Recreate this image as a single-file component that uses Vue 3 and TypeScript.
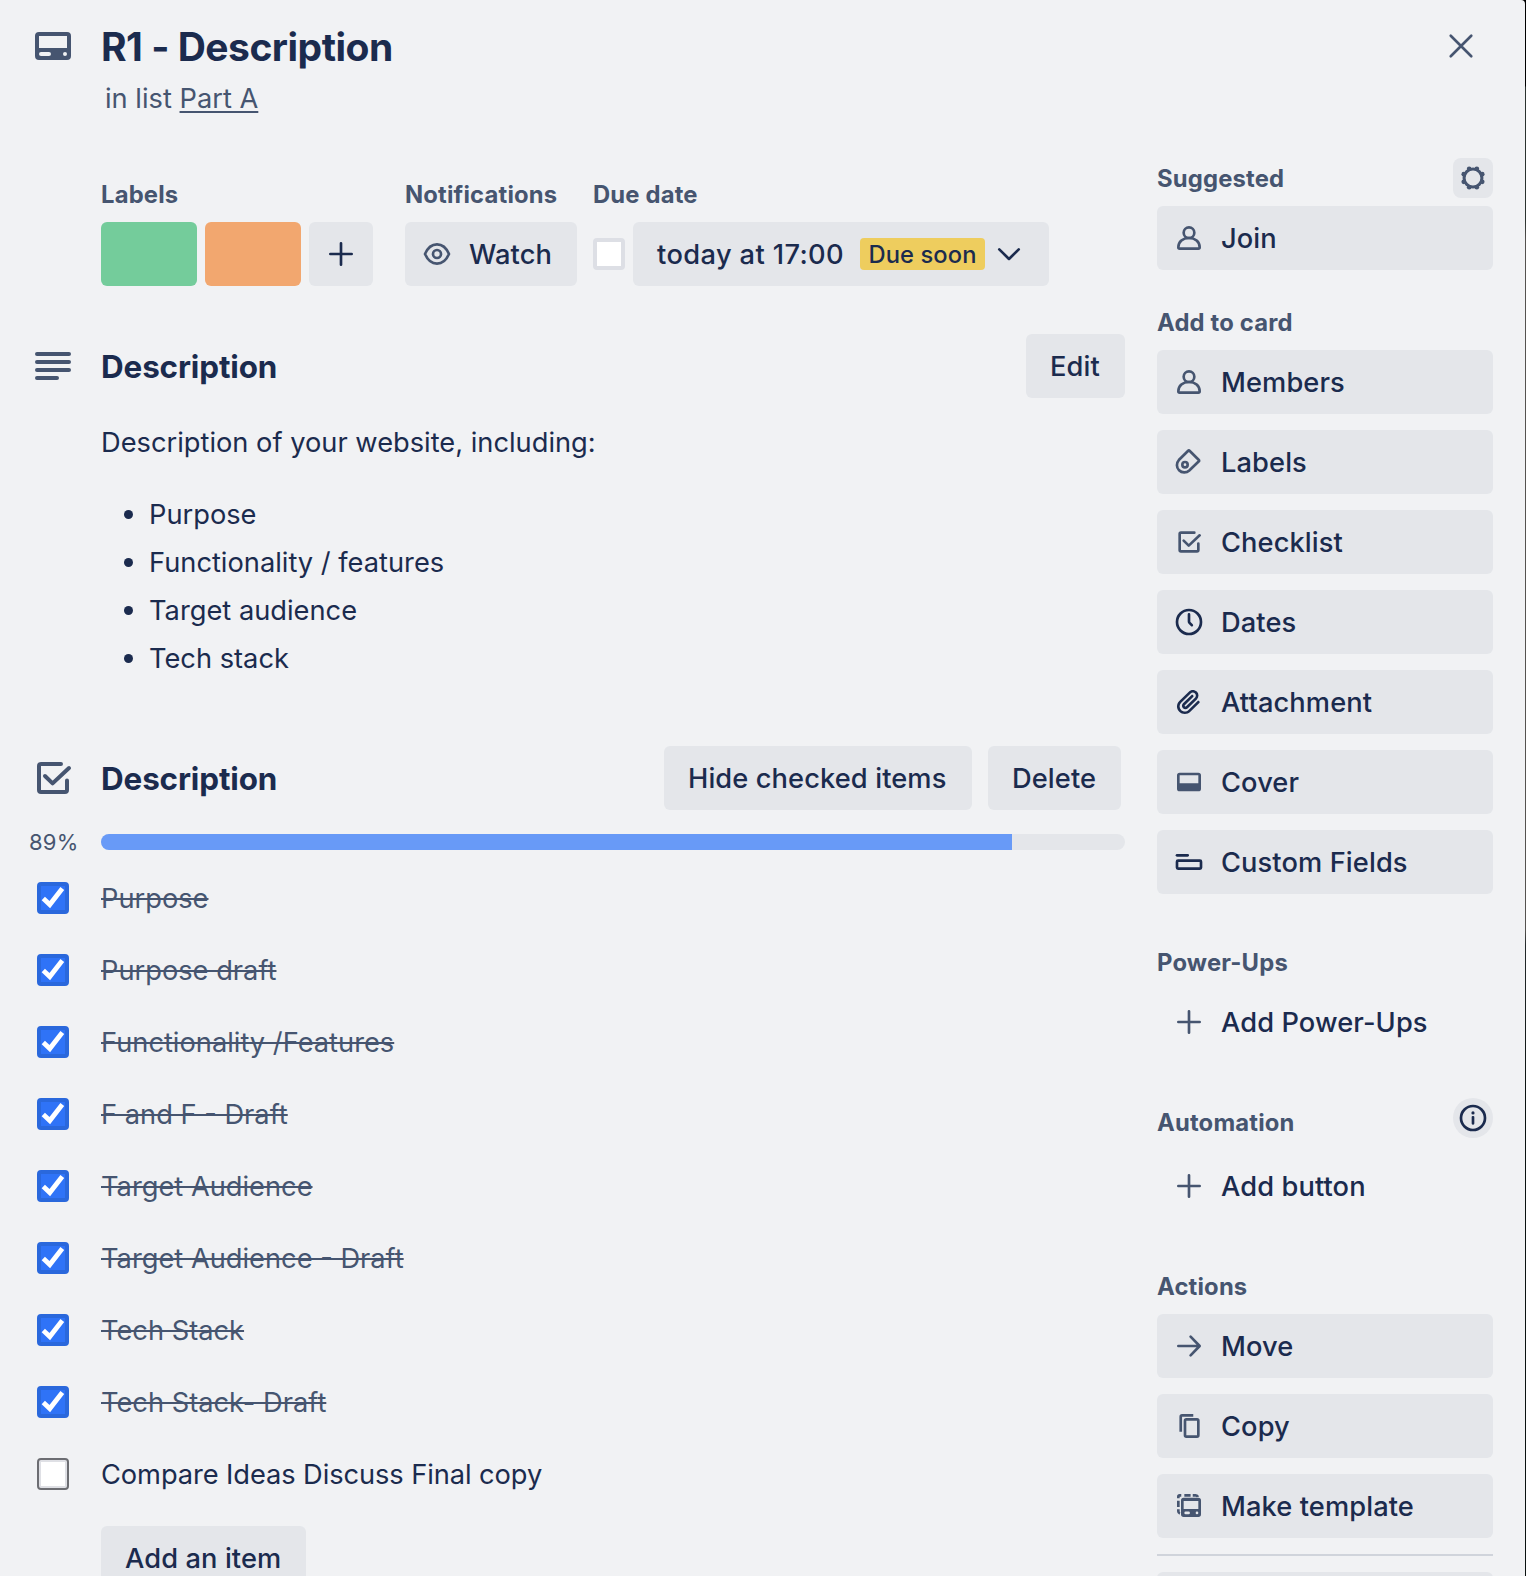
<script setup lang="ts">
interface CheckItem {
  text: string
  done: boolean
}
interface SideButton {
  label: string
  icon: string
}

const bullets: string[] = ['Purpose', 'Functionality / features', 'Target audience', 'Tech stack']

const items: CheckItem[] = [
  { text: 'Purpose', done: true },
  { text: 'Purpose draft', done: true },
  { text: 'Functionality /Features', done: true },
  { text: 'F and F - Draft', done: true },
  { text: 'Target Audience', done: true },
  { text: 'Target Audience - Draft', done: true },
  { text: 'Tech Stack', done: true },
  { text: 'Tech Stack- Draft', done: true },
  { text: 'Compare Ideas Discuss Final copy', done: false },
]
const progress = Math.round((items.filter((i) => i.done).length / items.length) * 100)

const addButtons: SideButton[] = [
  { label: 'Members', icon: 'member' },
  { label: 'Labels', icon: 'label' },
  { label: 'Checklist', icon: 'checklist' },
  { label: 'Dates', icon: 'clock' },
  { label: 'Attachment', icon: 'clip' },
  { label: 'Cover', icon: 'cover' },
  { label: 'Custom Fields', icon: 'fields' },
]
const actionButtons: SideButton[] = [
  { label: 'Move', icon: 'move' },
  { label: 'Copy', icon: 'copy' },
  { label: 'Make template', icon: 'template' },
]

const gearTeeth = Array.from({ length: 8 }, (_, k) => {
  const a = ((22.5 + 45 * k) * Math.PI) / 180
  return { x: 12 + 7.5 * Math.cos(a), y: 12 + 7.5 * Math.sin(a) }
})
</script>

<template>
  <svg class="defs" width="0" height="0" aria-hidden="true">
    <symbol id="i-member" viewBox="0 0 24 24">
      <circle class="s" cx="12" cy="8" r="4" />
      <path class="s" d="M4 19C4 14.8 7.4 12 12 12s8 2.8 8 7c0 .6-.4 1-1 1H5c-.6 0-1-.4-1-1z" />
    </symbol>
    <symbol id="i-label" viewBox="0 0 24 24">
      <path class="s" d="M11.2 3.7 4.38 10.53a5.55 5.55 0 0 0 7.84 7.84L19.4 11.5a.7.7 0 0 0 0-1L12.6 3.7a1 1 0 0 0-1.4 0z" />
      <circle class="s" cx="9" cy="14" r="2" />
    </symbol>
    <symbol id="i-checklist" viewBox="0 0 24 24">
      <path class="s" d="M16 5H6a1 1 0 0 0-1 1v12a1 1 0 0 0 1 1h12a1 1 0 0 0 1-1v-4.8M8 11l3.8 3.7L20 7" />
    </symbol>
    <symbol id="i-clock" viewBox="0 0 24 24">
      <circle class="s" cx="12" cy="12" r="9" />
      <path class="s" d="M12 6.3v5.3q0 .6.4 1l1.7 1.8" />
    </symbol>
    <symbol id="i-clip" viewBox="0 0 24 24">
      <path class="f" d="M11.6426 17.9647C10.1123 19.46 7.62736 19.4606 6.10092 17.969C4.57505 16.478 4.57769 14.0467 6.10253 12.5566L13.2505 5.57184C14.1476 4.69522 15.5861 4.69251 16.4832 5.56921C17.3763 6.44184 17.3778 7.85135 16.4869 8.72199L9.78361 15.2722C9.53288 15.5172 9.12807 15.5163 8.86954 15.2636C8.61073 15.0107 8.60963 14.6158 8.86954 14.3618L15.0989 8.27463C15.4812 7.90109 15.4812 7.29546 15.0989 6.92192C14.7167 6.54838 14.0969 6.54838 13.7146 6.92192L7.48523 13.0091C6.45911 14.0118 6.46356 15.618 7.48523 16.6163C8.50674 17.6145 10.1511 17.6186 11.1679 16.6249L17.8712 10.0747C19.5274 8.45632 19.5244 5.83555 17.8676 4.2165C16.2047 2.59156 13.5266 2.59657 11.8662 4.21913L4.71822 11.2039C2.42951 13.4404 2.42555 17.083 4.71661 19.3218C7.00774 21.5606 10.7323 21.5597 13.0269 19.3174L19.7133 12.7837C20.0956 12.4101 20.0956 11.8045 19.7133 11.431C19.331 11.0574 18.7113 11.0574 18.329 11.431L11.6426 17.9647Z" />
    </symbol>
    <symbol id="i-cover" viewBox="0 0 24 24">
      <path class="f" d="M5 5h14a2 2 0 0 1 2 2v10a2 2 0 0 1-2 2H5a2 2 0 0 1-2-2V7a2 2 0 0 1 2-2zm0 2v6h14V7z" />
    </symbol>
    <symbol id="i-card" viewBox="0 0 24 24">
      <path class="f" d="M5 5h14a2 2 0 0 1 2 2v10a2 2 0 0 1-2 2H5a2 2 0 0 1-2-2V7a2 2 0 0 1 2-2zm0 2v6h14V7zm1 8a1 1 0 0 0 0 2h4a1 1 0 0 0 0-2zm12 0a1 1 0 0 0 0 2 1 1 0 0 0 0-2z" />
    </symbol>
    <symbol id="i-fields" viewBox="0 0 24 24">
      <path class="s" d="M3 7h8" />
      <rect class="s" x="3" y="11" width="18" height="6" rx="0.8" />
    </symbol>
    <symbol id="i-plus" viewBox="0 0 24 24">
      <path class="s" d="M12 4v16M4 12h16" />
    </symbol>
    <symbol id="i-move" viewBox="0 0 24 24">
      <path class="s" d="M4 12h15.6M13.2 5l6.8 7-6.8 7" />
    </symbol>
    <symbol id="i-copy" viewBox="0 0 24 24">
      <path class="s flat" d="M15.2 4H6.8a1 1 0 0 0-1 1v11.3" />
      <rect class="s" x="9" y="7" width="10" height="13" rx="1" />
    </symbol>
    <symbol id="i-template" viewBox="0 0 24 24">
      <path class="f" d="M8 5.8h11a2 2 0 0 1 2 2v10.4a2 2 0 0 1-2 2H8a2 2 0 0 1-2-2V7.8a2 2 0 0 1 2-2zm0 2.4v6h11v-6zm1.5 8a1 1 0 0 0 0 2h2.2a1 1 0 0 0 0-2zm8.5 0a1 1 0 0 0 0 2 1 1 0 0 0 0-2z" />
      <path class="s flat" d="M4 6.2V5a1 1 0 0 1 1-1h1.2M8.5 4h4.7M14.8 4h2.2q1.3 0 1.7 1.2M4 8v4.7M4 14.5v1.5q0 1.3 1.2 1.7" />
    </symbol>
    <symbol id="i-eye" viewBox="0 0 24 24">
      <path class="s" d="M3 12c2-4.6 5.2-7.2 9-7.2s7 2.6 9 7.2c-2 4.6-5.2 7.2-9 7.2S5 16.6 3 12z" />
      <circle class="s" cx="12" cy="12" r="3" />
    </symbol>
    <symbol id="i-chevron" viewBox="0 0 24 24">
      <path class="s" d="M4.7 8.5 12 15.7l7.3-7.2" />
    </symbol>
    <symbol id="i-close" viewBox="0 0 24 24">
      <path class="s" d="M4.3 4.3l15.4 15.4M19.7 4.3 4.3 19.7" />
    </symbol>
    <symbol id="i-info" viewBox="0 0 24 24">
      <circle class="s" cx="12" cy="12" r="9" />
      <rect class="f" x="11" y="10.5" width="2" height="6.5" rx="0.8" />
      <circle class="f" cx="12" cy="8.2" r="1.2" />
    </symbol>
    <symbol id="i-lines" viewBox="0 0 24 24">
      <path class="s" d="M4 6h16M4 10h16M4 14h16M4 18h10" />
    </symbol>
    <symbol id="i-gear" viewBox="0 0 24 24">
      <circle class="s ring" cx="12" cy="12" r="6.7" />
      <circle v-for="(t, k) in gearTeeth" :key="k" class="f" :cx="t.x" :cy="t.y" r="1.75" />
    </symbol>
  </svg>

  <div class="backdrop">
    <div class="card">
      <header class="head">
        <svg class="icon big"><use href="#i-card" /></svg>
        <div class="head-text">
          <h1>R1 - Description</h1>
          <p class="in-list">in list <a>Part A</a></p>
        </div>
        <svg class="icon close"><use href="#i-close" /></svg>
      </header>

      <div class="columns">
        <main class="main">
          <div class="meta">
            <div class="meta-group">
              <h3>Labels</h3>
              <div class="row">
                <span class="swatch green"></span>
                <span class="swatch orange"></span>
                <button class="btn square"><svg class="icon dark"><use href="#i-plus" /></svg></button>
              </div>
            </div>
            <div class="meta-group notifications">
              <h3>Notifications</h3>
              <button class="btn watch"><svg class="icon"><use href="#i-eye" /></svg><span class="cap">Watch</span></button>
            </div>
            <div class="meta-group due">
              <h3>Due date</h3>
              <div class="row">
                <span class="box due-box"></span>
                <button class="btn date">
                  <span class="cap when">today at 17:00</span>
                  <span class="badge">Due soon</span>
                  <svg class="icon dark"><use href="#i-chevron" /></svg>
                </button>
              </div>
            </div>
          </div>

          <section class="description">
            <div class="section-head">
              <svg class="icon big"><use href="#i-lines" /></svg>
              <h2>Description</h2>
              <button class="btn edit"><span class="cap">Edit</span></button>
            </div>
            <div class="prose">
              <p>Description of your website, including:</p>
              <ul>
                <li v-for="b in bullets" :key="b"><span class="cap">{{ b }}</span></li>
              </ul>
            </div>
          </section>

          <section class="checklist">
            <div class="section-head">
              <svg class="icon big"><use href="#i-checklist" /></svg>
              <h2>Description</h2>
              <div class="tools">
                <button class="btn hide"><span class="cap">Hide checked items</span></button>
                <button class="btn delete"><span class="cap">Delete</span></button>
              </div>
            </div>
            <div class="progress">
              <span class="percent">{{ progress }}%</span>
              <div class="track"><div class="fill" :style="{ width: progress + '%' }"></div></div>
            </div>
            <div v-for="item in items" :key="item.text" class="item">
              <span class="box" :class="item.done ? 'checked' : 'open'">
                <svg v-if="item.done" viewBox="0 0 32 32"><path d="M6.3 16.6l6.5 6 12.5-16" /></svg>
              </span>
              <span class="cap item-text" :class="{ done: item.done }">{{ item.text }}</span>
            </div>
            <button class="btn add-item"><span class="cap">Add an item</span></button>
          </section>
        </main>

        <aside class="side">
          <div class="side-head">
            <h3>Suggested</h3>
            <span class="mini gear"><svg class="icon"><use href="#i-gear" /></svg></span>
          </div>
          <button class="btn side-btn"><svg class="icon"><use href="#i-member" /></svg><span class="cap">Join</span></button>

          <div class="side-head add"><h3>Add to card</h3></div>
          <div class="stack">
            <button v-for="b in addButtons" :key="b.label" class="btn side-btn">
              <svg class="icon" :class="{ dark: ['clock', 'clip', 'fields'].includes(b.icon) }"><use :href="'#i-' + b.icon" /></svg>
              <span class="cap">{{ b.label }}</span>
            </button>
          </div>

          <div class="side-head power"><h3>Power-Ups</h3></div>
          <button class="btn side-btn ghost"><svg class="icon"><use href="#i-plus" /></svg><span class="cap">Add Power-Ups</span></button>

          <div class="side-head auto">
            <h3>Automation</h3>
            <span class="mini info"><svg class="icon dark"><use href="#i-info" /></svg></span>
          </div>
          <button class="btn side-btn ghost"><svg class="icon"><use href="#i-plus" /></svg><span class="cap">Add button</span></button>

          <div class="side-head actions"><h3>Actions</h3></div>
          <div class="stack">
            <button v-for="b in actionButtons" :key="b.label" class="btn side-btn">
              <svg class="icon"><use :href="'#i-' + b.icon" /></svg>
              <span class="cap">{{ b.label }}</span>
            </button>
          </div>
          <hr />
          <button class="btn side-btn"></button>
        </aside>
      </div>
    </div>
  </div>
</template>

<style>
body {
  margin: 0;
  overflow: hidden;
}
.s {
  fill: none;
  stroke: currentColor;
  stroke-width: 2;
  stroke-linecap: round;
  stroke-linejoin: round;
}
.s.flat {
  stroke-linecap: butt;
}
.s.ring {
  stroke-width: 2.3;
}
.f {
  fill: currentColor;
  fill-rule: evenodd;
}
</style>

<style scoped>
* {
  box-sizing: border-box;
}
.defs {
  position: absolute;
}
.backdrop {
  width: 1526px;
  height: 1576px;
  overflow: hidden;
  background: linear-gradient(#000 0, #000 86px, #2b322f 87px, #2b322f 220px, #55524f 240px, #55524f 930px, #23292a 945px, #0b1210 1100px, #0b1210 100%);
}
.card {
  width: 1525px;
  height: 1576px;
  overflow: hidden;
  background: #f1f2f4;
  border-top-right-radius: 4px;
  color: #1b2b4e;
  font-family: Inter, 'Liberation Sans', sans-serif;
  font-size: 27.25px;
  line-height: 40px;
}
h1,
h2,
h3,
p,
ul {
  margin: 0;
}
.cap {
  padding-top: 2px;
}
.icon {
  display: block;
  flex: none;
  width: 32px;
  height: 32px;
  color: #465570;
}
.icon.big {
  width: 48px;
  height: 48px;
}
.icon.dark {
  color: #1b2b4e;
}
.head {
  display: flex;
  height: 158px;
  padding: 22px 48px 0 29px;
}
.head-text {
  flex: 1;
  margin-left: 24px;
}
h1 {
  height: 48px;
  font-size: 39px;
  line-height: 50px;
  font-weight: 660;
  letter-spacing: -0.5px;
}
.in-list {
  margin: 9px 0 0 4px;
  color: #465570;
}
.in-list a {
  text-decoration: underline;
  text-decoration-thickness: 2px;
  text-underline-offset: 3px;
}
.close {
  margin-top: 7.5px;
}
.columns {
  display: flex;
  padding: 0 32px 0 29px;
  gap: 32px;
}
.main {
  width: 1096px;
}
.side {
  width: 336px;
}
h3 {
  padding-top: 1px;
  font-size: 23.8px;
  line-height: 40px;
  font-weight: 650;
  letter-spacing: 0.18px;
  color: #465570;
}
.btn {
  display: flex;
  align-items: center;
  height: 64px;
  padding: 0 24px;
  border: 0;
  border-radius: 6px;
  background: #e4e6ea;
  color: #1b2b4e;
  font: 550 27.25px / 40px Inter, 'Liberation Sans', sans-serif;
  letter-spacing: 0.1px;
  white-space: nowrap;
}
.meta {
  display: flex;
  height: 176px;
  padding: 16px 0 0 72px;
}
.meta-group h3 {
  height: 48px;
}
.row {
  display: flex;
  align-items: center;
  gap: 8px;
}
.swatch {
  width: 96px;
  height: 64px;
  border-radius: 6px;
}
.green {
  background: #74cc9b;
}
.orange {
  background: #f2a76f;
}
.square {
  width: 64px;
  padding: 0 16px;
}
.notifications {
  width: 172px;
  margin-left: 32px;
}
.watch {
  width: 172px;
  padding: 0 0 0 16px;
  gap: 16px;
}
.due {
  margin-left: 16px;
}
.box {
  flex: none;
  width: 32px;
  height: 32px;
  border-radius: 4px;
  background: #fff;
}
.due-box {
  border: 4px solid #dddfe5;
}
.date {
  width: 416px;
  padding-right: 0;
}
.when {
  width: 187px;
  letter-spacing: 0.38px;
  text-align: left;
}
.badge {
  width: 125px;
  height: 32px;
  margin: 0 8px 0 16px;
  border-radius: 4px;
  background: #eecd5e;
  font-size: 23.7px;
  line-height: 34px;
  text-align: center;
}
.section-head {
  display: flex;
  align-items: center;
  height: 64px;
}
h2 {
  flex: 1;
  margin-left: 24px;
  padding-top: 2px;
  font-size: 31.4px;
  font-weight: 650;
  letter-spacing: -0.12px;
}
.edit {
  width: 99px;
}
.description {
  height: 412px;
}
.prose {
  padding: 25px 0 0 72px;
}
.prose ul {
  padding: 0 0 0 48px;
  margin-top: 27px;
  list-style: none;
}
.prose li {
  display: flex;
  align-items: center;
  height: 48px;
}
.prose li::before {
  content: '';
  width: 9px;
  height: 9px;
  margin: 0 16px 0 -25px;
  border-radius: 50%;
  background: #1b2b4e;
}
.tools {
  display: flex;
  gap: 16px;
  margin-right: 4px;
}
.hide {
  width: 308px;
}
.delete {
  width: 133px;
}
.progress {
  display: flex;
  align-items: center;
  height: 16px;
  margin: 24px 0 16px;
}
.percent {
  width: 72px;
  font-size: 22px;
  letter-spacing: 0.2px;
  color: #465570;
}
.track {
  flex: 1;
  height: 16px;
  border-radius: 8px;
  background: #e4e6ea;
  overflow: hidden;
}
.fill {
  height: 100%;
  background: #689af7;
}
.item {
  display: flex;
  align-items: center;
  height: 72px;
  padding: 0 0 8px 8px;
}
.box.checked {
  border: 4px solid #2a68dc;
  background: #2f73f7;
}
.box.checked svg {
  display: block;
  width: 32px;
  height: 32px;
  margin: -4px;
}
.box.checked path {
  fill: none;
  stroke: #fff;
  stroke-width: 4.8;
}
.box.open {
  border: 2px solid #6c6d72;
  box-shadow: inset 0 0 0 2px #dfe0e5;
}
.item-text {
  margin-left: 32px;
  letter-spacing: -0.08px;
}
.item-text.done {
  color: #465570;
  letter-spacing: 0;
  text-decoration: line-through;
  text-decoration-thickness: 2px;
}
.add-item {
  width: 205px;
  margin: 12px 0 0 72px;
}
.side-head {
  display: flex;
  justify-content: space-between;
  height: 48px;
}
.mini {
  display: flex;
  align-items: center;
  justify-content: center;
  width: 40px;
  height: 40px;
  background: #e4e6ea;
}
.gear {
  border-radius: 8px;
}
.info {
  border-radius: 50%;
  margin-top: -4px;
}
.add {
  margin-top: 32px;
}
.power {
  margin-top: 48px;
}
.auto {
  margin-top: 48px;
  height: 52px;
}
.actions {
  margin-top: 48px;
}
.stack {
  display: flex;
  flex-direction: column;
  gap: 16px;
}
.side-btn {
  width: 336px;
  padding: 0 16px;
  gap: 16px;
}
.ghost {
  background: transparent;
}
hr {
  height: 2px;
  margin: 16px 0;
  border: 0;
  background: #d0d4db;
}
</style>
